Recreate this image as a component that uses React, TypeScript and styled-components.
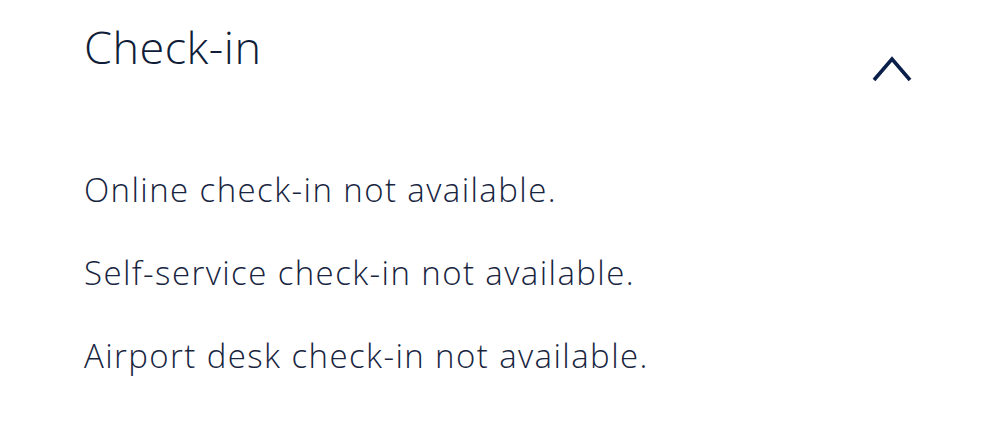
import React from 'react'
import styled, { createGlobalStyle } from 'styled-components'

const GlobalStyle = createGlobalStyle`
  html, body {
    margin: 0;
    padding: 0;
    background: #fff;
  }
  body {
    font-family: 'Open Sans', 'Noto Sans', sans-serif;
    color: #17243d;
  }
`

const Panel = styled.section`
  width: 1000px;
  height: 444px;
  box-sizing: border-box;
  padding: 18px 88px 0 84px;
  background: #fff;
`

const Header = styled.div`
  display: flex;
  justify-content: space-between;
  align-items: flex-start;
`

const Title = styled.h2`
  margin: 0;
  font-size: 45px;
  font-weight: 300;
  line-height: 58px;
  letter-spacing: 0.5px;
  color: #0f1d38;
`

const Toggle = styled.button`
  border: 0;
  padding: 0;
  margin-top: 37px;
  background: none;
  display: flex;
  cursor: pointer;
`

const List = styled.div`
  display: flex;
  flex-direction: column;
  gap: 39px;
  margin-top: 85px;
`

const Line = styled.p`
  margin: 0;
  font-size: 33px;
  font-weight: 300;
  line-height: 44px;
  letter-spacing: 1.4px;
  color: #18253f;
`

export default function App() {
  return (
    <>
      <GlobalStyle />
      <Panel>
        <Header>
          <Title>Check-in</Title>
          <Toggle aria-label='Collapse'>
            <svg width='40' height='28' viewBox='0 0 40 28'>
              <path
                d='M2 25 L20 4 L38 25'
                fill='none'
                stroke='#0b1f4b'
                strokeWidth='3.6'
                strokeLinejoin='miter'
              />
            </svg>
          </Toggle>
        </Header>
        <List>
          <Line>Online check-in not available.</Line>
          <Line>Self-service check-in not available.</Line>
          <Line>Airport desk check-in not available.</Line>
        </List>
      </Panel>
    </>
  )
}
